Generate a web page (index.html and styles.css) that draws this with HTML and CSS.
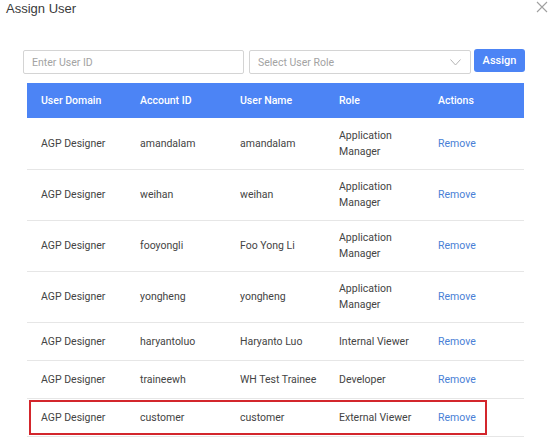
FILE: index.html
```html
<!DOCTYPE html>
<html>
<head>
<meta charset="utf-8">
<link rel="stylesheet" href="styles.css">
</head>
<body>
<div class="dialog">
  <div class="title-bar">
    <div class="title">Assign User</div>
    <div class="close">
      <svg width="12" height="12" viewBox="0 0 12 12"><path d="M1 1L11 11M11 1L1 11" stroke="#a0a0a0" stroke-width="1.1" fill="none"/></svg>
    </div>
  </div>
  <div class="body">
    <div class="controls">
      <div class="input">Enter User ID</div>
      <div class="select">
        <span>Select User Role</span>
        <svg width="11" height="7" viewBox="0 0 11 7"><path d="M0.5 0.5L5.5 6L10.5 0.5" stroke="#b5b5b5" stroke-width="1" fill="none"/></svg>
      </div>
      <div class="btn">Assign</div>
    </div>
    <div class="table">
      <div class="row head">
        <div>User Domain</div><div>Account ID</div><div>User Name</div><div>Role</div><div>Actions</div>
      </div>
      <div class="row tall first">
        <div>AGP Designer</div><div>amandalam</div><div>amandalam</div><div>Application<br>Manager</div><div class="link">Remove</div>
      </div>
      <div class="row tall">
        <div>AGP Designer</div><div>weihan</div><div>weihan</div><div>Application<br>Manager</div><div class="link">Remove</div>
      </div>
      <div class="row tall">
        <div>AGP Designer</div><div>fooyongli</div><div>Foo Yong Li</div><div>Application<br>Manager</div><div class="link">Remove</div>
      </div>
      <div class="row tall">
        <div>AGP Designer</div><div>yongheng</div><div>yongheng</div><div>Application<br>Manager</div><div class="link">Remove</div>
      </div>
      <div class="row">
        <div>AGP Designer</div><div>haryantoluo</div><div>Haryanto Luo</div><div>Internal Viewer</div><div class="link">Remove</div>
      </div>
      <div class="row">
        <div>AGP Designer</div><div>traineewh</div><div>WH Test Trainee</div><div>Developer</div><div class="link">Remove</div>
      </div>
      <div class="row marked">
        <div>AGP Designer</div><div>customer</div><div>customer</div><div>External Viewer</div><div class="link">Remove</div>
      </div>
    </div>
  </div>
</div>
</body>
</html>
```

FILE: styles.css
```css
html, body {
  margin: 0;
  padding: 0;
  background: #ffffff;
}

.dialog {
  width: 552px;
  height: 441px;
  overflow: hidden;
  font-family: Roboto, "Liberation Sans", Arial, sans-serif;
  color: #444444;
}

.title-bar {
  display: flex;
  justify-content: space-between;
  align-items: flex-start;
  padding: 0 4px 0 6px;
  height: 49px;
}

.title {
  font-family: "Liberation Sans", Arial, sans-serif;
  font-size: 13px;
  line-height: 17px;
  color: #3a3a3a;
}

.close {
  padding-top: 1px;
}

.close svg {
  display: block;
}

.body {
  padding: 0 27px 0 23px;
}

.controls {
  display: flex;
  align-items: flex-start;
  height: 34px;
}

.input, .select {
  box-sizing: border-box;
  height: 24px;
  margin-top: 1px;
  border: 1px solid #d4d4d4;
  border-radius: 2px;
  font-size: 10.5px;
  color: #a3a3a3;
  display: flex;
  align-items: center;
  padding-left: 8px;
}

.input {
  width: 221px;
}

.select {
  width: 222px;
  margin-left: 5px;
  justify-content: space-between;
  padding-right: 9px;
}

.select svg {
  display: block;
}

.btn {
  box-sizing: border-box;
  width: 51px;
  height: 23px;
  margin-left: 3px;
  background: #4c84f5;
  color: #ffffff;
  border-radius: 3px;
  font-size: 11px;
  font-weight: 500;
  display: flex;
  align-items: center;
  justify-content: center;
}

.table {
  margin-left: 4px;
  width: 497px;
}

.row {
  display: grid;
  grid-template-columns: 99px 100px 99px 99px 100px;
  align-items: center;
  height: 37px;
  border-bottom: 1px solid #e6e6e6;
  font-size: 10.5px;
  line-height: 16px;
  position: relative;
}

.row > div {
  padding-left: 14px;
}

.row.tall {
  height: 50px;
}

.row.tall.first {
  height: 51px;
}

.row.head {
  height: 35px;
  background: #4c84f5;
  color: #ffffff;
  font-weight: 500;
  border-bottom: none;
}

.link {
  color: #4a7fd6;
}

.row.marked::after {
  content: "";
  position: absolute;
  left: 2px;
  top: 1px;
  width: 454px;
  height: 31px;
  border: 2px solid #d3262c;
}
```
